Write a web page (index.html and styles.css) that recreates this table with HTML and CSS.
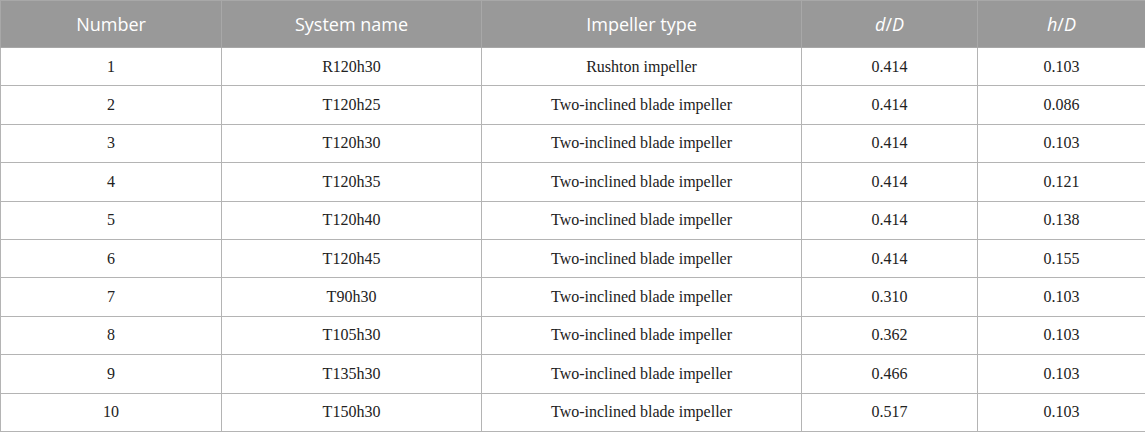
FILE: index.html
```html
<!DOCTYPE html>
<html>
<head>
<meta charset="utf-8">
<link rel="stylesheet" href="styles.css">
</head>
<body>
<table class="data">
  <colgroup>
    <col class="c1"><col class="c2"><col class="c3"><col class="c4"><col class="c5">
  </colgroup>
  <thead>
    <tr><th>Number</th><th>System name</th><th>Impeller type</th><th><i>d</i>/<i>D</i></th><th><i>h</i>/<i>D</i></th></tr>
  </thead>
  <tbody>
    <tr><td>1</td><td>R120h30</td><td>Rushton impeller</td><td>0.414</td><td>0.103</td></tr>
    <tr><td>2</td><td>T120h25</td><td>Two-inclined blade impeller</td><td>0.414</td><td>0.086</td></tr>
    <tr><td>3</td><td>T120h30</td><td>Two-inclined blade impeller</td><td>0.414</td><td>0.103</td></tr>
    <tr><td>4</td><td>T120h35</td><td>Two-inclined blade impeller</td><td>0.414</td><td>0.121</td></tr>
    <tr><td>5</td><td>T120h40</td><td>Two-inclined blade impeller</td><td>0.414</td><td>0.138</td></tr>
    <tr><td>6</td><td>T120h45</td><td>Two-inclined blade impeller</td><td>0.414</td><td>0.155</td></tr>
    <tr><td>7</td><td>T90h30</td><td>Two-inclined blade impeller</td><td>0.310</td><td>0.103</td></tr>
    <tr><td>8</td><td>T105h30</td><td>Two-inclined blade impeller</td><td>0.362</td><td>0.103</td></tr>
    <tr><td>9</td><td>T135h30</td><td>Two-inclined blade impeller</td><td>0.466</td><td>0.103</td></tr>
    <tr><td>10</td><td>T150h30</td><td>Two-inclined blade impeller</td><td>0.517</td><td>0.103</td></tr>
  </tbody>
</table>
</body>
</html>
```
FILE: styles.css
```css
html, body {
  margin: 0;
  padding: 0;
  background: #ffffff;
}
.data {
  width: 1145px;
  border-collapse: collapse;
  table-layout: fixed;
}
.c1 { width: 221px; }
.c2 { width: 260px; }
.c3 { width: 320px; }
.c4 { width: 176px; }
.c5 { width: 168px; }
.data th, .data td {
  border: 1px solid #b4b4b4;
  text-align: center;
  padding: 0;
}
.data th {
  background: #999999;
  color: #ffffff;
  font-family: "Open Sans", "Noto Sans", sans-serif;
  font-weight: 400;
  font-size: 18px;
  height: 46px;
  border-color: #a8a8a8;
}
.data td {
  font-family: "Liberation Serif", "Times New Roman", serif;
  font-size: 16px;
  color: #222222;
  height: 37.4px;
}
```
